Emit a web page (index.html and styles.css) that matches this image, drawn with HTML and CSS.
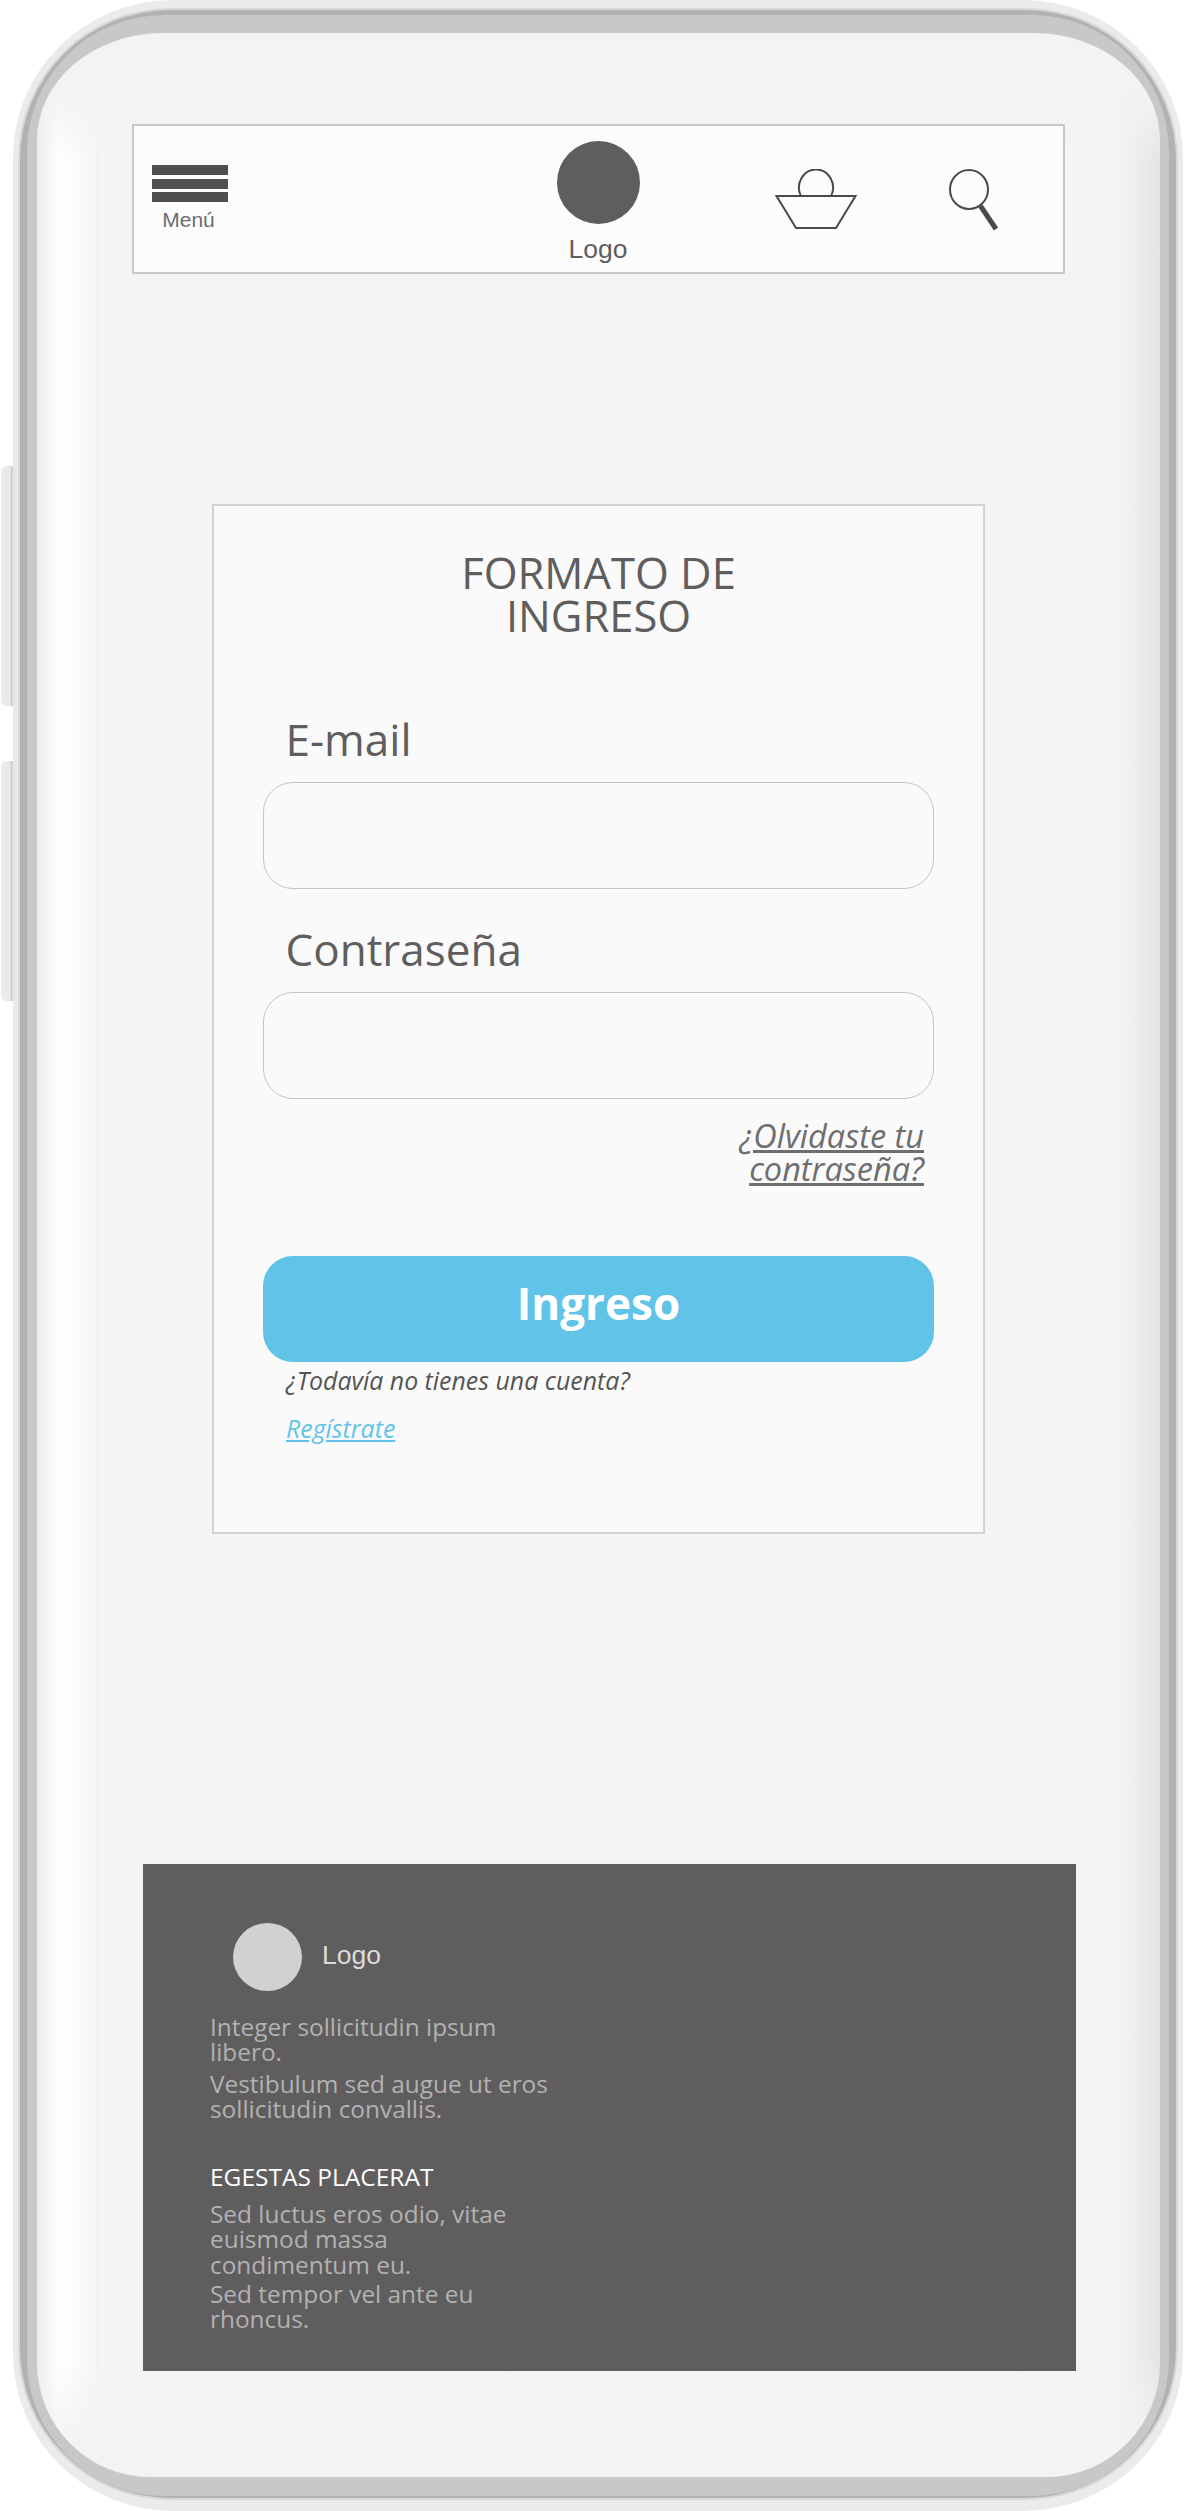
FILE: index.html
```html
<!DOCTYPE html>
<html lang="es">
<head>
    <meta charset="UTF-8">
    <meta name="viewport" content="width=device-width, initial-scale=1.0">
    <title>Formato de ingreso</title>
    <link rel="stylesheet" href="styles.css">
</head>
<body>
    <div class="phone">
        <span class="side-btn side-btn-top"></span>
        <span class="side-btn side-btn-bottom"></span>
        <div class="phone-rim">
            <div class="phone-band">
                <div class="screen">

                    <!-- Top bar -->
                    <header class="topbar">
                        <div class="menu">
                            <span class="menu-bar"></span>
                            <span class="menu-bar"></span>
                            <span class="menu-bar"></span>
                            <span class="menu-label">Menú</span>
                        </div>
                        <div class="brand">
                            <span class="brand-dot"></span>
                            <span class="brand-label">Logo</span>
                        </div>
                        <svg class="icon-basket" width="84" height="62" viewBox="0 0 84 62">
                            <path d="M26 27 A17 18 0 1 1 56 27" fill="none" stroke="#4a4a4a" stroke-width="2"/>
                            <path d="M1.5 27 H80.5 L61 59 H21 Z" fill="none" stroke="#4a4a4a" stroke-width="2"/>
                        </svg>
                        <svg class="icon-search" width="50" height="62" viewBox="0 0 50 62">
                            <ellipse cx="20" cy="20.5" rx="19" ry="19.5" fill="none" stroke="#4a4a4a" stroke-width="2"/>
                            <path d="M31.5 37 L47 60" stroke="#4a4a4a" stroke-width="5"/>
                        </svg>
                    </header>

                    <!-- Login form -->
                    <form class="login">
                        <h1>FORMATO DE<br>INGRESO</h1>

                        <label for="email">E-mail</label>
                        <input type="text" id="email" name="email">

                        <label for="password" class="label-second">Contraseña</label>
                        <input type="password" id="password" name="password">

                        <a href="#" class="forgot">¿Olvidaste tu<br>contraseña?</a>

                        <button type="submit">Ingreso</button>
                        <p class="no-account">¿Todavía no tienes una cuenta?</p>
                        <a href="#" class="register">Regístrate</a>
                    </form>

                    <!-- Footer -->
                    <footer class="footer">
                        <div class="footer-brand">
                            <span class="footer-dot"></span>
                            <span class="footer-logo">Logo</span>
                        </div>
                        <p>Integer sollicitudin ipsum<br>libero.</p>
                        <p class="gap">Vestibulum sed augue ut eros<br>sollicitudin convallis.</p>
                        <h2>EGESTAS PLACERAT</h2>
                        <p>Sed luctus eros odio, vitae<br>euismod massa<br>condimentum eu.</p>
                        <p class="gap-small">Sed tempor vel ante eu<br>rhoncus.</p>
                    </footer>

                </div>
            </div>
        </div>
    </div>
</body>
</html>
```

FILE: styles.css
```css
body {
    font-family: "Open Sans", Arial, sans-serif;
    background-color: #ffffff;
    margin: 0;
    padding: 0;
    color: #5f5d5e;
}

/* Phone frame */
.phone {
    position: relative;
    box-sizing: border-box;
    width: 1170px;
    height: 2511px;
    margin-left: 13px;
    padding: 10px 7px 13px 7px;
    background-color: #ebebeb;
    border-radius: 160px / 157px;
}

.phone-rim {
    box-sizing: border-box;
    height: 100%;
    padding: 5px 7px 2px 7px;
    background-color: #b2b2b2;
    border-radius: 150px;
    box-shadow: 0 0 0 2px #d8d8d8;
}

.phone-band {
    box-sizing: border-box;
    height: 100%;
    padding: 18px 9px 19px 10px;
    background-color: #c8c8c8;
    border-radius: 137px;
}

.screen {
    box-sizing: border-box;
    height: 100%;
    padding-top: 91px;
    background-color: #f4f4f4;
    background-image:
        linear-gradient(to bottom, #f3f3f3 60px, rgba(243, 243, 243, 0) 130px),
        linear-gradient(to top, #f3f3f3 30px, rgba(243, 243, 243, 0) 120px),
        linear-gradient(to right, #ececec 0, #f8f8f8 13px, #fefefe 20px, #fefefe 29px, #fbfbfb 40px, #f8f8f8 49px, #f5f5f5 60px, #ececec 60px, #ececec 61px, #f4f4f4 61px, #f4f4f4 1080px, #ededed 1100px, #e4e4e4 1123px);
    border-radius: 126px 126px 113px 113px / 107px 107px 114px 114px;
    overflow: hidden;
}

.side-btn {
    position: absolute;
    left: -12px;
    width: 16px;
    height: 240px;
    background: linear-gradient(to right, #eeeeee, #e6e6e6 60%, #c6c6c6 66%, #e4e4e4 74%, #e8e8e8);
    border-radius: 5px;
}

.side-btn-top {
    top: 466px;
}

.side-btn-bottom {
    top: 761px;
}

/* Top bar */
.topbar {
    position: relative;
    box-sizing: border-box;
    width: 933px;
    height: 150px;
    margin-left: 95px;
    background-color: #fcfcfc;
    border: 2px solid #c8c8c8;
}

.menu {
    position: absolute;
    left: 18px;
    top: 39px;
    width: 76px;
    display: flex;
    flex-direction: column;
    align-items: center;
    gap: 3.5px;
}

.menu-bar {
    width: 76px;
    height: 10px;
    background-color: #504e4f;
}

.menu-label {
    margin: 3px 3px 0 0;
    font-family: "Liberation Sans", Arial, sans-serif;
    font-size: 21px;
    line-height: 22px;
    color: #6d6d6d;
}

.brand {
    position: absolute;
    left: 423px;
    top: 15px;
    width: 83px;
    display: flex;
    flex-direction: column;
    align-items: center;
}

.brand-dot {
    width: 83px;
    height: 83px;
    border-radius: 50%;
    background-color: #5f5d5e;
}

.brand-label {
    margin-top: 9px;
    margin-left: -1px;
    font-family: "Liberation Sans", Arial, sans-serif;
    font-size: 26.5px;
    line-height: 32px;
    color: #5f5d5e;
}

.icon-basket {
    position: absolute;
    left: 641px;
    top: 43px;
}

.icon-search {
    position: absolute;
    left: 815px;
    top: 43px;
}

/* Login form */
.login {
    box-sizing: border-box;
    display: flex;
    flex-direction: column;
    width: 773px;
    height: 1030px;
    margin: 230px 0 0 175px;
    padding: 45px 49px 0;
    background-color: #fafafa;
    border: 2px solid #d2d2d2;
}

h1 {
    margin: 0 0 77px;
    font-size: 43.5px;
    font-weight: 400;
    line-height: 43px;
    text-align: center;
    color: #5f5d5e;
}

label {
    display: block;
    height: 50px;
    margin: 0 0 18px 22.5px;
    font-size: 44px;
    line-height: 50px;
    color: #5f5d5e;
}

.label-second {
    margin-top: 35px;
}

input[type="text"], input[type="password"] {
    box-sizing: border-box;
    width: 100%;
    height: 107px;
    margin: 0;
    background-color: #fafafa;
    border: 1px solid #c8c3c0;
    border-radius: 30px;
    outline: none;
}

.forgot {
    align-self: flex-end;
    margin: 20px 10px 0 0;
    font-size: 32.5px;
    font-style: italic;
    line-height: 33px;
    text-align: right;
    color: #6e6e6e;
}

button {
    width: 100%;
    height: 106px;
    margin-top: 71px;
    padding: 0 0 12px;
    background-color: #62c3e9;
    color: #ffffff;
    border: none;
    border-radius: 30px;
    font-family: inherit;
    font-size: 44px;
    font-weight: 700;
    cursor: pointer;
}

.no-account {
    margin: 0 0 0 23px;
    font-size: 24.9px;
    font-style: italic;
    line-height: 36px;
    color: #555555;
}

.register {
    align-self: flex-start;
    margin: 12px 0 0 23px;
    font-size: 24.9px;
    font-style: italic;
    line-height: 36px;
    color: #62c3e9;
}

/* Footer */
.footer {
    box-sizing: border-box;
    width: 933px;
    height: 507px;
    margin: 330px 0 0 106px;
    padding: 59px 0 0 67px;
    background-color: #5f5d5e;
}

.footer-brand {
    display: flex;
    align-items: center;
    gap: 20px;
    margin: 0 0 23px 23px;
}

.footer-dot {
    width: 69px;
    height: 68px;
    border-radius: 50%;
    background-color: #d2d0d1;
}

.footer-logo {
    margin-top: -3px;
    font-family: "Liberation Sans", Arial, sans-serif;
    font-size: 26.5px;
    color: #dcdcdc;
}

.footer p {
    margin: 0;
    font-size: 24.4px;
    line-height: 25.3px;
    color: #b2b2b2;
}

.footer p.gap {
    margin-top: 6px;
}

.footer p.gap-small {
    margin-top: 4px;
}

.footer h2 {
    margin: 40.5px 0 9.5px;
    font-size: 24.5px;
    font-weight: 400;
    line-height: 30px;
    color: #ffffff;
}
```
